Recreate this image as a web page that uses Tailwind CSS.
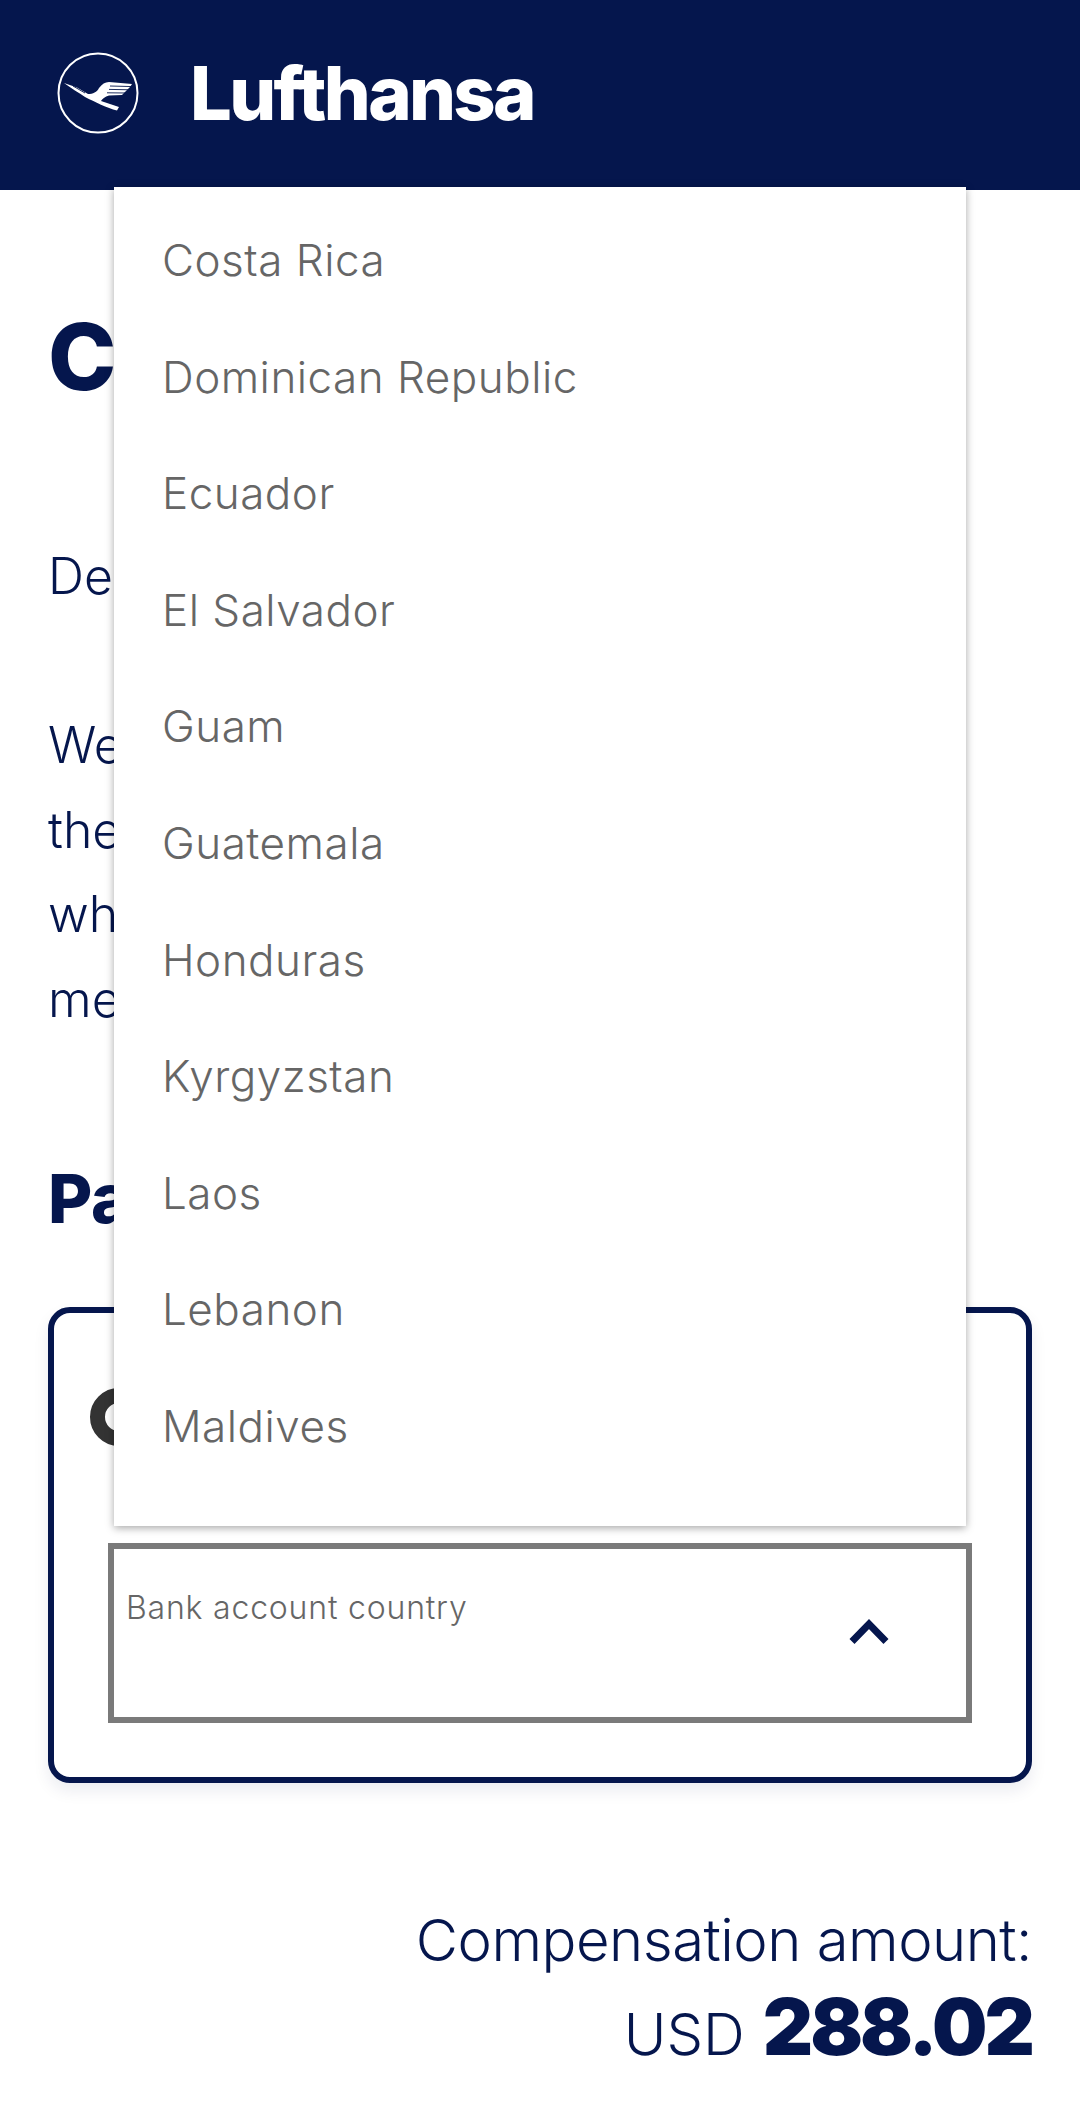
<!DOCTYPE html>
<html lang="en">
<head>
  <meta charset="UTF-8" />
  <title>Lufthansa</title>
  <script src="https://cdn.jsdelivr.net/npm/@tailwindcss/browser@4"></script>
</head>
<body class="bg-white font-['Inter',sans-serif] text-[#05164d]">
  <div class="relative w-[1080px] h-[2105px] overflow-hidden">
    <!-- Header -->
    <header class="h-[190px] bg-[#05164d] flex items-center pl-[57px] gap-[51px]">
      <svg width="82" height="82" viewBox="0 0 82 82" class="shrink-0 mb-[4px]">
        <circle cx="41" cy="41" r="39.5" fill="none" stroke="#fff" stroke-width="2"/>
        <path fill="#fff" d="M7 31 L20 35.5 L31 42 C36 42 40 40 42 36 C45 32 48 30 52 30 L75 32 L73 35 L71 37 L69 39 L67 41 L65 43 L52 43.5 C48 44.5 45 47 44 49 L62 55 L60 58.5 C50 56 38 50 28 45 C22 41 14 36 7 31Z"/>
        <path d="M16 34 L28 41 M53 34 L76 34.6 M52 37.4 L74 37.8 M50 40.8 L70 41" fill="none" stroke="#05164d" stroke-width="0.9"/>
      </svg>
      <div class="text-white font-extrabold text-[74px] tracking-[-2.7px] leading-none mb-[4px]">Lufthansa</div>
    </header>

    <!-- Page content -->
    <main class="px-[48px]">
      <h1 class="mt-[121px] text-[92px] leading-[92px] font-extrabold">C</h1>
      <p class="mt-[131px] text-[50px] leading-[85px] font-light">Dear</p>
      <p class="mt-[84px] text-[50px] leading-[84.5px] font-light">We<br>the<br>who<br>me</p>
      <h2 class="mt-[117px] text-[68px] leading-[80px] font-extrabold">Pa</h2>

      <section class="mt-[69px] h-[476px] border-[6px] border-[#05164d] rounded-[22px] shadow-[0_8px_16px_rgba(5,22,77,0.08)] pl-[36px] pt-[75px]">
        <div class="w-[58px] h-[58px] rounded-full border-[15px] border-[#333]"></div>
        <div class="mt-[97px] ml-[18px] w-[864px] h-[180px] border-[6px] border-[#7a7a7a] flex items-start justify-between">
          <span class="ml-[12px] mt-[39px] text-[32px] leading-[40px] text-[#666] font-[350] tracking-[0.8px]">Bank account country</span>
          <svg width="40" height="26" viewBox="0 0 40 26" class="mt-[69px] mr-[77px]">
            <path d="M3 23.5 L20 6 L37 23.5" fill="none" stroke="#05164d" stroke-width="7"/>
          </svg>
        </div>
      </section>

      <div class="mt-[122px] text-right">
        <div class="text-[58px] leading-[70px] font-light tracking-[-0.5px]">Compensation amount:</div>
        <div class="mt-[7px] leading-[90px] flex justify-end items-baseline gap-[18px]"><span class="text-[58px] font-light">USD</span><span class="text-[78px] font-black tracking-[-3px]">288.02</span></div>
      </div>
    </main>

    <!-- Country dropdown -->
    <ul class="absolute left-[114px] top-[187px] w-[852px] h-[1339px] bg-white shadow-[0_2px_8px_rgba(0,0,0,0.35)] pt-[15px] pl-[48px] text-[44px] leading-[116.6px] text-[#666] font-[350] tracking-[0.5px]">
      <li>Costa Rica</li>
      <li>Dominican Republic</li>
      <li>Ecuador</li>
      <li>El Salvador</li>
      <li>Guam</li>
      <li>Guatemala</li>
      <li>Honduras</li>
      <li>Kyrgyzstan</li>
      <li>Laos</li>
      <li>Lebanon</li>
      <li>Maldives</li>
    </ul>
  </div>
</body>
</html>
